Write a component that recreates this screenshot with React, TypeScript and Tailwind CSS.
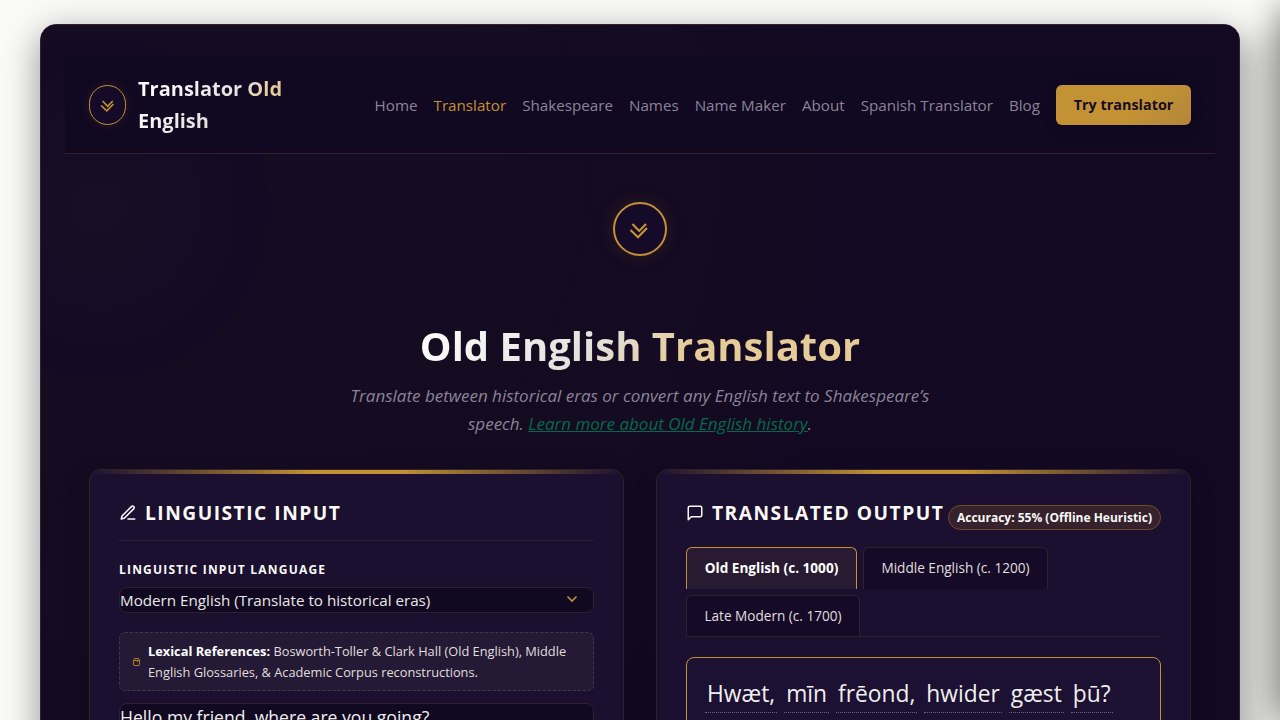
import React from "react";

const NAV_LINKS = [
  "Home",
  "Translator",
  "Shakespeare",
  "Names",
  "Name Maker",
  "About",
  "Spanish Translator",
  "Blog",
];

const WORDS = ["Hwæt,", "mīn", "frēond,", "hwider", "gæst", "þū?"];

const ChevronsMark = ({ className }: { className: string }) => (
  <svg
    viewBox="0 0 20 20"
    className={className}
    fill="none"
    stroke="#c29235"
    strokeWidth="2.2"
  >
    <path d="M3.5 4 L10.2 11 L17 4" />
    <path d="M1.5 10 L9 17.2 L18 8" />
  </svg>
);

const Header = () => (
  <header className="relative flex items-center justify-between border-b border-[#33202c] bg-[#110822] px-6 py-4">
    <div className="flex w-[230px] items-center gap-3">
      <span className="flex h-10 w-[37px] shrink-0 items-center justify-center rounded-full border border-[#c29235] bg-[#150a28] shadow-[0_0_12px_rgba(194,146,53,0.12)]">
        <ChevronsMark className="mt-px h-[15px] w-[15px]" />
      </span>
      <span className="w-[150px] bg-linear-135 from-white from-10% via-[#e4e2de] via-55% to-[#e5cb98] to-70% bg-clip-text text-xl leading-8 font-bold text-transparent">
        Translator Old English
      </span>
    </div>
    <nav className="flex items-center gap-4 text-[15.2px] whitespace-nowrap text-[#8b8498]">
      {NAV_LINKS.map((link) => (
        <a
          key={link}
          className={link === "Translator" ? "text-[#c29235]" : undefined}
        >
          {link}
        </a>
      ))}
      <button className="h-10 w-[135px] rounded-md bg-linear-135 from-[#c29235] from-60% to-[#b3863a] text-[14.4px] font-bold text-[#170b25] shadow-[0_4px_15px_rgba(0,0,0,0.2)]">
        Try translator
      </button>
    </nav>
  </header>
);

const Hero = () => (
  <section className="relative flex flex-col items-center pt-12 text-center">
    <span className="flex size-[54px] items-center justify-center rounded-full border-2 border-[#c29235] bg-[#150a28] shadow-[0_0_20px_rgba(194,146,53,0.12)]">
      <ChevronsMark className="mt-0.5 mr-0.5 h-5 w-5" />
    </span>
    <h1 className="mt-[66px] bg-linear-135 from-white via-[#e2e1de] via-40% to-[#e5cb98] to-60% bg-clip-text text-[40px] leading-[48px] font-bold text-transparent">
      Old English Translator
    </h1>
    <p className="mt-3 w-[600px] text-[17px] leading-[28px] text-[#8b8498] italic">
      Translate between historical eras or convert any English text to
      Shakespeare’s speech.{" "}
      <a className="text-[#046a4b] underline">
        Learn more about Old English history
      </a>
      .
    </p>
  </section>
);

const Card = ({ children }: { children: React.ReactNode }) => (
  <section className="relative h-[600px] min-w-0 flex-1 overflow-hidden rounded-xl border border-[#33202c] bg-[#1b102f] px-[29px] pt-[29px] shadow-[0_8px_24px_rgba(0,0,0,0.2)]">
    <div className="absolute inset-x-0 top-0 h-1 bg-[linear-gradient(90deg,transparent,#c29235_42%,#c29235_58%,transparent)]" />
    {children}
  </section>
);

const InputCard = () => (
  <Card>
    <h2 className="flex h-[42px] items-start gap-2 border-b border-dotted border-[#3a2834] text-[19.2px] leading-7 font-bold tracking-[1.5px] text-[#faf9f6]">
      <svg
        viewBox="0 0 24 24"
        className="mt-[5px] size-[18px]"
        fill="none"
        stroke="currentColor"
        strokeWidth="2"
        strokeLinecap="round"
        strokeLinejoin="round"
      >
        <path d="M12 20h9" />
        <path d="M16.5 3.5a2.12 2.12 0 0 1 3 3L7 19l-4 1 1-4Z" />
      </svg>
      LINGUISTIC INPUT
    </h2>
    <label className="mt-[19px] block text-xs leading-5 font-bold tracking-[1.2px] text-[#faf9f6]">
      LINGUISTIC INPUT LANGUAGE
    </label>
    <div className="mt-[7px] flex h-[26px] items-center justify-between rounded-lg border border-[#33202c] bg-[#110822] pr-[15px] text-[15.2px] text-[#e9e8e5]">
      Modern English (Translate to historical eras)
      <svg
        viewBox="0 0 12 12"
        className="mb-0.5 size-3"
        fill="none"
        stroke="#c29235"
        strokeWidth="1.6"
      >
        <path d="M1.5 3.5 L6 8 L10.5 3.5" />
      </svg>
    </div>
    <div className="mt-[19px] flex h-[59px] items-center gap-2 rounded-md border border-dashed border-[#433748] bg-[#251a36] pl-[13px] text-[12.8px] leading-[21px] text-[#e0dfdc]">
      <svg
        viewBox="0 0 7 8"
        className="h-2 w-[7px] shrink-0"
        fill="none"
        stroke="#b07c2c"
        strokeWidth="1"
      >
        <path d="M.5 2.5 L1.5 .5 H5.5 L6.5 2 V7 L6 7.5 H1 L.5 7 V2.5 H6 M4.5 2.5 V4" />
      </svg>
      <p>
        <b className="text-white">Lexical References:</b> Bosworth-Toller &amp;
        Clark Hall (Old English), Middle English Glossaries, &amp; Academic
        Corpus reconstructions.
      </p>
    </div>
    <div className="mt-3 h-[150px] rounded-lg border border-[#33202c] bg-[#110822] text-[17.6px] leading-[26px] text-[#f0efec]">
      Hello my friend, where are you going?
    </div>
  </Card>
);

const OutputCard = () => (
  <Card>
    <div className="flex h-12 items-start justify-between">
      <h2 className="flex items-start gap-2 text-[19.2px] leading-7 font-bold tracking-[1.5px] whitespace-nowrap text-[#faf9f6]">
        <svg
          viewBox="0 0 24 24"
          className="mt-[5px] size-[18px]"
          fill="none"
          stroke="currentColor"
          strokeWidth="2"
          strokeLinecap="round"
          strokeLinejoin="round"
        >
          <path d="M21 15a2 2 0 0 1-2 2H7l-4 4V5a2 2 0 0 1 2-2h14a2 2 0 0 1 2 2z" />
        </svg>
        TRANSLATED OUTPUT
      </h2>
      <span className="mt-1.5 flex h-[25px] w-[213px] shrink-0 items-center justify-center rounded-full border border-[#6e4b2c] bg-[#35222d] text-xs font-bold whitespace-nowrap text-[#faf9f6]">
        Accuracy: 55% (Offline Heuristic)
      </span>
    </div>
    <div className="flex flex-wrap gap-1.5 border-b border-[#33202c] text-[13.6px] text-[#e0dfdc]">
      <div className="flex h-[42px] w-[171px] items-center justify-center rounded-t-md border border-b-0 border-[#c29235] bg-[#281a30] font-bold text-white">
        Old English (c. 1000)
      </div>
      <div className="flex h-[42px] w-[185px] items-center justify-center rounded-t-md border border-b-0 border-[#33202c] bg-[#150a28]">
        Middle English (c. 1200)
      </div>
      <div className="flex h-[41px] w-[174px] items-center justify-center rounded-t-md border border-b-0 border-[#33202c] bg-[#150a28]">
        Late Modern (c. 1700)
      </div>
    </div>
    <div className="mt-5 flex h-[200px] items-start gap-[7px] rounded-lg border border-[#c29235] bg-[#1c1133] px-[18px] pt-[18px] text-[22.8px] leading-9 whitespace-nowrap text-[#f0efec]">
      {WORDS.map((word) => (
        <span
          key={word}
          className="border-b border-dotted border-[#6d6675] px-0.5"
        >
          {word}
        </span>
      ))}
    </div>
  </Card>
);

export default function App() {
  return (
    <div className="relative h-[720px] overflow-hidden bg-[#fafaf8] px-10 pt-6 font-['Open_Sans',sans-serif]">
      <div className="absolute top-[20px] left-[1290px] h-[680px] w-60 shadow-[0_0_30px_14px_rgba(0,0,0,0.42)]" />
      <div className="absolute top-[40px] left-[1240px] h-[800px] w-60 bg-black/10 blur-[14px]" />
      <div className="relative h-[1000px] overflow-hidden rounded-2xl border border-[#33202c] bg-[#130922] px-6 pt-8 shadow-[0_10px_36px_rgba(0,0,0,0.42)]">
        <div className="absolute inset-0 bg-radial-[circle_at_15%_15%] from-[#160c21] from-20% to-[#130922] to-50%" />
        <div className="absolute top-[10px] -left-[115px] size-[345px] rounded-full bg-radial from-[#180e25] to-[#140a24] to-60%" />
        <Header />
        <Hero />
        <div className="relative mt-[31px] flex gap-8 px-6">
          <InputCard />
          <OutputCard />
        </div>
      </div>
    </div>
  );
}
